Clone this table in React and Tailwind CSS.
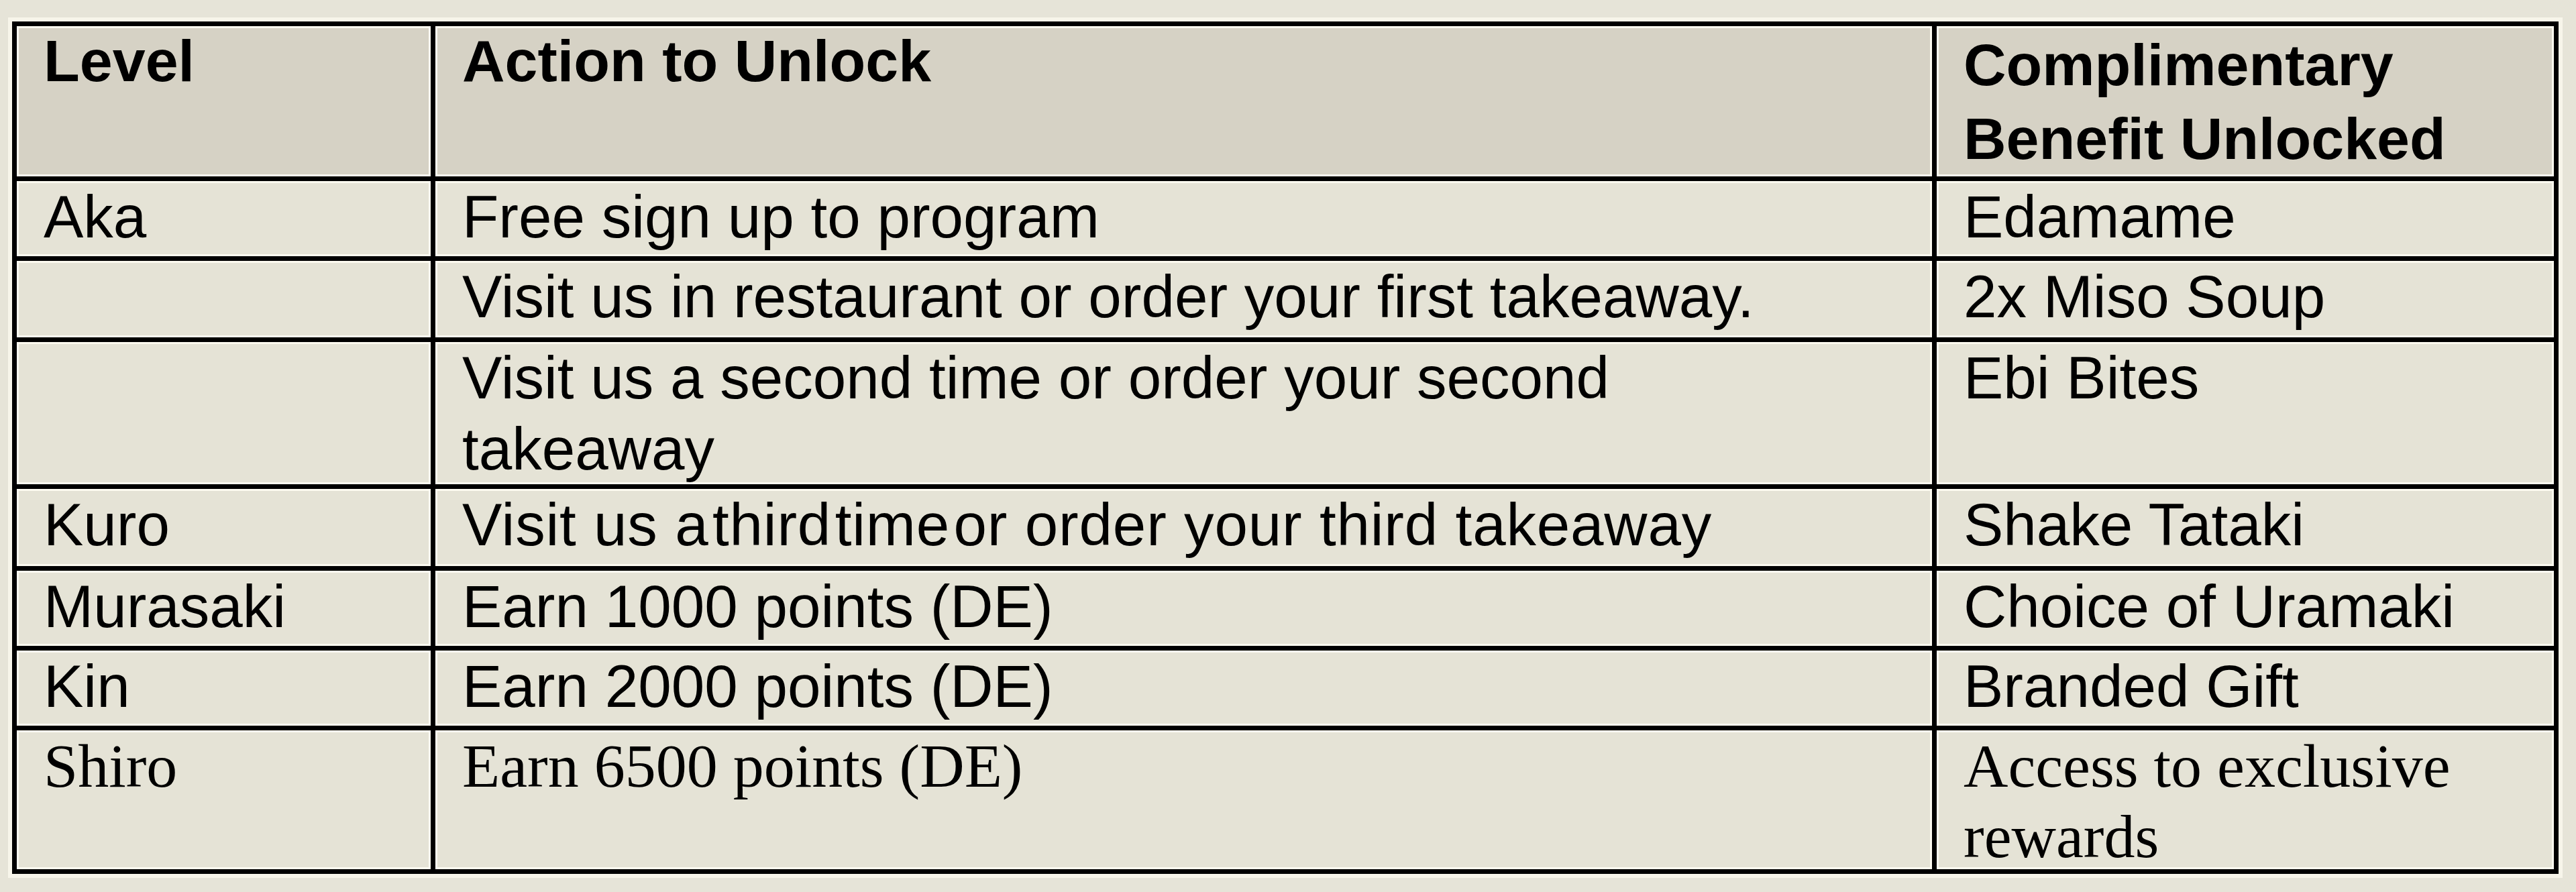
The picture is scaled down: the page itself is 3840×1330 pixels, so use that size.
import React from "react";

const sans = "font-['Liberation_Sans',Arial,sans-serif]";
const serif = "font-['Liberation_Serif','Times_New_Roman',serif]";

function Cell({ head, children, className = "" }) {
  return (
    <div
      className={`border-[3px] border-[#fcfaf0] pl-[37px] pr-[20px] text-black ${
        head ? "bg-[#d6d2c5]" : "bg-[#e5e3d6]"
      } ${className}`}
    >
      {children}
    </div>
  );
}

function H({ children }) {
  return (
    <div className={`${sans} font-bold text-[88px] leading-[110px] -mt-[6px]`}>{children}</div>
  );
}

function B({ children, className = "" }) {
  return (
    <div className={`${sans} text-[89px] leading-[106px] -mt-[3px] ${className}`}>{children}</div>
  );
}

function S({ children }) {
  return <div className={`${serif} text-[92px] leading-[105px] -mt-[2px]`}>{children}</div>;
}

export default function App() {
  return (
    <div className="w-[3840px] h-[1330px] bg-[#e6e4d8] pt-[26px] pl-[12px]">
      <div className="w-[3808px] p-[6px] bg-[#f7f5ea]">
        <div className="grid grid-cols-[617px_2231px_920px] grid-rows-[224px_112px_114px_212px_115px_112px_112px_207px] gap-[7px] p-[7px] bg-black overflow-hidden">
          <Cell head>
            <H>Level</H>
          </Cell>
          <Cell head>
            <H>Action to Unlock</H>
          </Cell>
          <Cell head>
            <div className="pt-[6px]">
              <H>
                Complimentary
                <br />
                Benefit Unlocked
              </H>
            </div>
          </Cell>

          <Cell>
            <B>Aka</B>
          </Cell>
          <Cell>
            <B>Free sign up to program</B>
          </Cell>
          <Cell>
            <B>Edamame</B>
          </Cell>

          <Cell />
          <Cell>
            <B>Visit us in restaurant or order your first takeaway.</B>
          </Cell>
          <Cell>
            <B>2x Miso Soup</B>
          </Cell>

          <Cell />
          <Cell>
            <B>
              Visit us a second time or order your second
              <br />
              takeaway
            </B>
          </Cell>
          <Cell>
            <B>Ebi Bites</B>
          </Cell>

          <Cell>
            <B>Kuro</B>
          </Cell>
          <Cell>
            <B className="tracking-[0.8px]">
              Visit us <span className="[word-spacing:-20px]">a third time or</span> order your third takeaway
            </B>
          </Cell>
          <Cell>
            <B>Shake Tataki</B>
          </Cell>

          <Cell>
            <B>Murasaki</B>
          </Cell>
          <Cell>
            <B>Earn 1000 points (DE)</B>
          </Cell>
          <Cell>
            <B>Choice of Uramaki</B>
          </Cell>

          <Cell>
            <B>Kin</B>
          </Cell>
          <Cell>
            <B>Earn 2000 points (DE)</B>
          </Cell>
          <Cell>
            <B>Branded Gift</B>
          </Cell>

          <Cell>
            <S>Shiro</S>
          </Cell>
          <Cell>
            <S>Earn 6500 points (DE)</S>
          </Cell>
          <Cell>
            <S>Access to exclusive rewards</S>
          </Cell>
        </div>
      </div>
    </div>
  );
}
